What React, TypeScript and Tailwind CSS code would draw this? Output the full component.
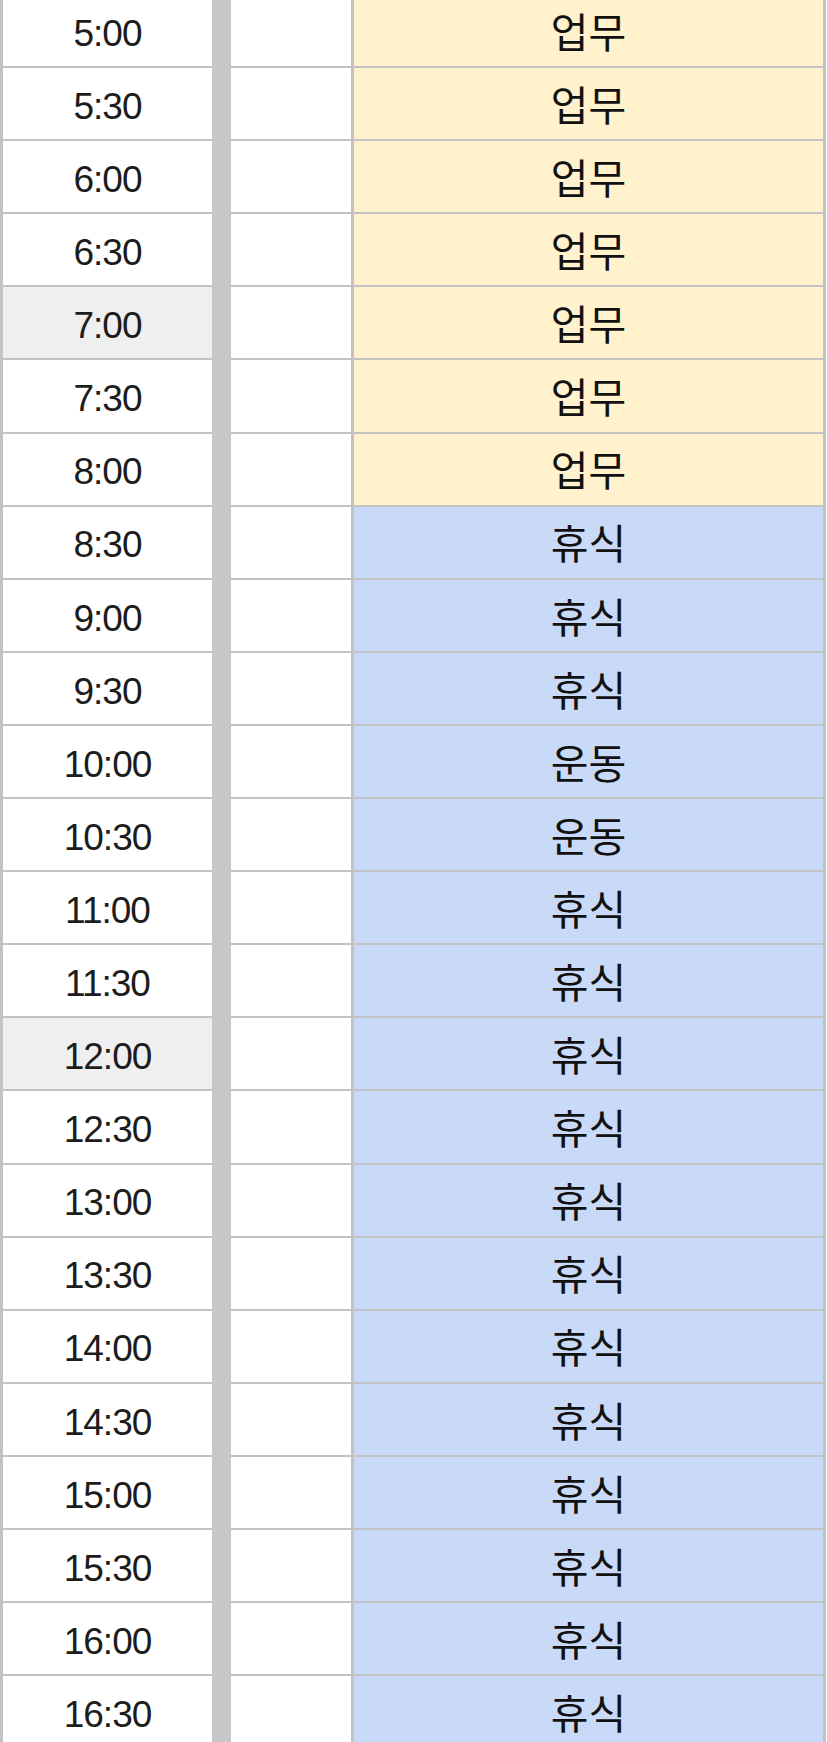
const rows = [
  { time: "5:00", task: "업무" },
  { time: "5:30", task: "업무" },
  { time: "6:00", task: "업무" },
  { time: "6:30", task: "업무" },
  { time: "7:00", task: "업무", mark: true },
  { time: "7:30", task: "업무" },
  { time: "8:00", task: "업무" },
  { time: "8:30", task: "휴식" },
  { time: "9:00", task: "휴식" },
  { time: "9:30", task: "휴식" },
  { time: "10:00", task: "운동" },
  { time: "10:30", task: "운동" },
  { time: "11:00", task: "휴식" },
  { time: "11:30", task: "휴식" },
  { time: "12:00", task: "휴식", mark: true },
  { time: "12:30", task: "휴식" },
  { time: "13:00", task: "휴식" },
  { time: "13:30", task: "휴식" },
  { time: "14:00", task: "휴식" },
  { time: "14:30", task: "휴식" },
  { time: "15:00", task: "휴식" },
  { time: "15:30", task: "휴식" },
  { time: "16:00", task: "휴식" },
  { time: "16:30", task: "휴식" },
];

export default function App() {
  return (
    <div className="w-[827px] h-[1742px] overflow-hidden bg-white">
      <div className="-mt-[5px]">
        {rows.map((row) => (
          <div key={row.time} className="flex h-[73.1px]">
            <div
              className={`w-[212px] flex items-center justify-center border-l-[3px] border-b-2 border-[#c3c3c3] text-[37px] tracking-[-1px] text-[#1c1c1c] ${
                row.mark ? "bg-[#efefef]" : "bg-white"
              }`}
              style={{ fontFamily: '"Liberation Sans", Arial, sans-serif' }}
            >
              <span className="pt-[6px]">{row.time}</span>
            </div>
            <div className="w-[19px] bg-[#c7c7c7]" />
            <div className="w-[123px] bg-white border-r-[3px] border-b-2 border-[#c3c3c3]" />
            <div
              className={`w-[472px] flex items-center justify-center border-r-[3px] border-b-2 border-[#c3c3c3] text-[41px] text-[#111] ${
                row.task === "업무" ? "bg-[#fff2cc]" : "bg-[#c9daf8]"
              }`}
              style={{ fontFamily: '"Noto Sans CJK KR", "Noto Sans", sans-serif' }}
            >
              {row.task}
            </div>
          </div>
        ))}
      </div>
    </div>
  );
}
